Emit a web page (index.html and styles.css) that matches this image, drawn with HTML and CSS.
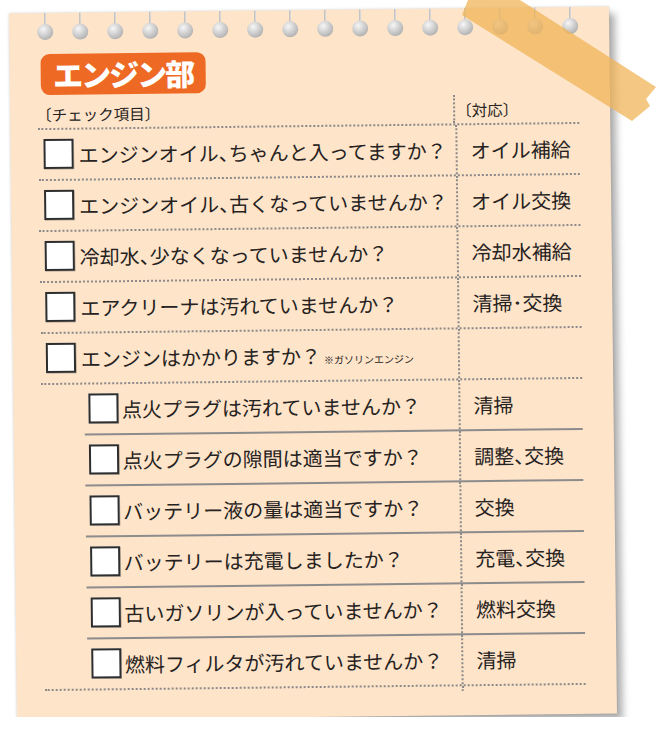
FILE: index.html
```html
<!DOCTYPE html>
<html lang="ja">
<head>
<meta charset="utf-8">
<title>エンジン部</title>
<link rel="stylesheet" href="styles.css">
</head>
<body>
<div class="paper">
  <div class="rings">
    <span class="ring"></span><span class="ring"></span><span class="ring"></span><span class="ring"></span>
    <span class="ring"></span><span class="ring"></span><span class="ring"></span><span class="ring"></span>
    <span class="ring"></span><span class="ring"></span><span class="ring"></span><span class="ring"></span>
    <span class="ring"></span><span class="ring"></span><span class="ring"></span><span class="ring"></span>
  </div>
  <h1 class="badge">エンジン部</h1>
  <div class="sheet">
    <div class="head">
      <div class="hq">〔チェック項目〕</div>
      <div class="ha">〔対応〕</div>
    </div>
    <div class="row">
      <div class="q"><span class="box"></span><span class="t">エンジンオイル<span class="p">、</span>ちゃんと入ってますか？</span></div>
      <div class="a">オイル補給</div>
    </div>
    <div class="row">
      <div class="q"><span class="box"></span><span class="t">エンジンオイル<span class="p">、</span>古くなっていませんか？</span></div>
      <div class="a">オイル交換</div>
    </div>
    <div class="row">
      <div class="q"><span class="box"></span><span class="t">冷却水<span class="p">、</span>少なくなっていませんか？</span></div>
      <div class="a">冷却水補給</div>
    </div>
    <div class="row">
      <div class="q"><span class="box"></span><span class="t">エアクリーナは汚れていませんか？</span></div>
      <div class="a">清掃･交換</div>
    </div>
    <div class="row">
      <div class="q"><span class="box"></span><span class="t">エンジンはかかりますか？<small class="note">※ガソリンエンジン</small></span></div>
      <div class="a"></div>
    </div>
    <div class="group">
      <div class="sub">
        <div class="q"><span class="box"></span><span class="t">点火プラグは汚れていませんか？</span></div>
        <div class="a">清掃</div>
      </div>
      <div class="sub">
        <div class="q"><span class="box"></span><span class="t">点火プラグの隙間は適当ですか？</span></div>
        <div class="a">調整<span class="p">、</span>交換</div>
      </div>
      <div class="sub">
        <div class="q"><span class="box"></span><span class="t">バッテリー液の量は適当ですか？</span></div>
        <div class="a">交換</div>
      </div>
      <div class="sub">
        <div class="q"><span class="box"></span><span class="t">バッテリーは充電しましたか？</span></div>
        <div class="a">充電<span class="p">、</span>交換</div>
      </div>
      <div class="sub">
        <div class="q"><span class="box"></span><span class="t">古いガソリンが入っていませんか？</span></div>
        <div class="a">燃料交換</div>
      </div>
      <div class="sub">
        <div class="q"><span class="box"></span><span class="t">燃料フィルタが汚れていませんか？</span></div>
        <div class="a">清掃</div>
      </div>
    </div>
    <div class="tail"></div>
  </div>
</div>
<svg class="tape" width="657" height="130" viewBox="0 0 657 130" aria-hidden="true">
  <polygon points="468,0 520,0 656,87 646,99 650,106 632,121 462,15" fill="#f0b356" fill-opacity="0.74"/>
</svg>
</body>
</html>
```

FILE: styles.css
```css
* { box-sizing: border-box; }

body {
  margin: 0;
  background: #ffffff;
  font-family: "Noto Sans CJK JP", "Noto Sans", sans-serif;
  color: #252221;
}

.paper {
  margin: 9.5px 0 0 13px;
  width: 600px;
  height: 707px;
  padding-left: 28px;
  background: #fee4c9;
  transform: rotate(-0.65deg);
  box-shadow: 0 0 3px rgba(0, 0, 0, 0.18), 6px 7px 7px rgba(0, 0, 0, 0.3);
}

/* binder holes */
.rings {
  display: flex;
  gap: 19px;
  height: 27px;
}
.ring {
  display: flex;
  flex-direction: column;
  align-items: center;
  width: 16px;
}
.ring::before {
  content: "";
  width: 2px;
  height: 12px;
  background: linear-gradient(90deg, #b9b9b9, #e2e2e2);
}
.ring::after {
  content: "";
  width: 16px;
  height: 16px;
  margin-top: -1px;
  border-radius: 50%;
  background: radial-gradient(circle at 38% 32%, #f6f6f6 0, #d2d2d2 40%, #a9a9a9 85%, #9b9b9b 100%);
}

.badge {
  margin: 14px 0 0 2.5px;
  width: fit-content;
  height: 41px;
  padding: 0 12px 0 13px;
  background: #ee6a24;
  color: #ffffff;
  border-radius: 9px;
  font-size: 30px;
  line-height: 40px;
  font-weight: 900;
  letter-spacing: -2px;
}

.sheet {
  margin-top: 4.5px;
  width: 541px;
}

.head {
  display: flex;
  height: 28px;
  font-size: 15.5px;
}
.hq {
  width: 417px;
  display: flex;
  align-items: center;
  margin-left: -2px;
}
.ha {
  flex: 1;
  display: flex;
  align-items: center;
  border-left: 2px dotted #8a8a8a;
  padding-left: 1px;
}

.row, .sub {
  display: flex;
  height: 51px;
  font-size: 20px;
}
.row {
  border-top: 2px dotted #8a8a8a;
}
.q {
  width: 417px;
  display: flex;
  align-items: center;
  gap: 5px;
  padding-left: 5px;
}
.a {
  flex: 1;
  display: flex;
  align-items: center;
  border-left: 2px dotted #8a8a8a;
  padding-left: 13px;
}

.box {
  flex: none;
  width: 30px;
  height: 30px;
  background: #ffffff;
  border: 2px solid #2e2e2e;
  box-shadow: 0.5px 0.5px 0 rgba(0, 0, 0, 0.35);
}

.t { white-space: nowrap; }
.p { font-feature-settings: "halt"; }

.note {
  font-size: 10px;
  margin-left: 3px;
}

.group {
  border-top: 2px dotted #8a8a8a;
  border-bottom: 2px dotted #8a8a8a;
}
.sub {
  margin-left: 43px;
}
.sub:first-child {
  height: 49px;
}
.sub + .sub {
  border-top: 2px solid #8c8c8c;
}
.sub .q {
  width: 374px;
  gap: 4px;
  padding-left: 3.5px;
}

.tail {
  height: 5px;
  margin-left: 417px;
  border-left: 2px dotted #8a8a8a;
}

.tape {
  position: absolute;
  top: 0;
  left: 0;
}
```
